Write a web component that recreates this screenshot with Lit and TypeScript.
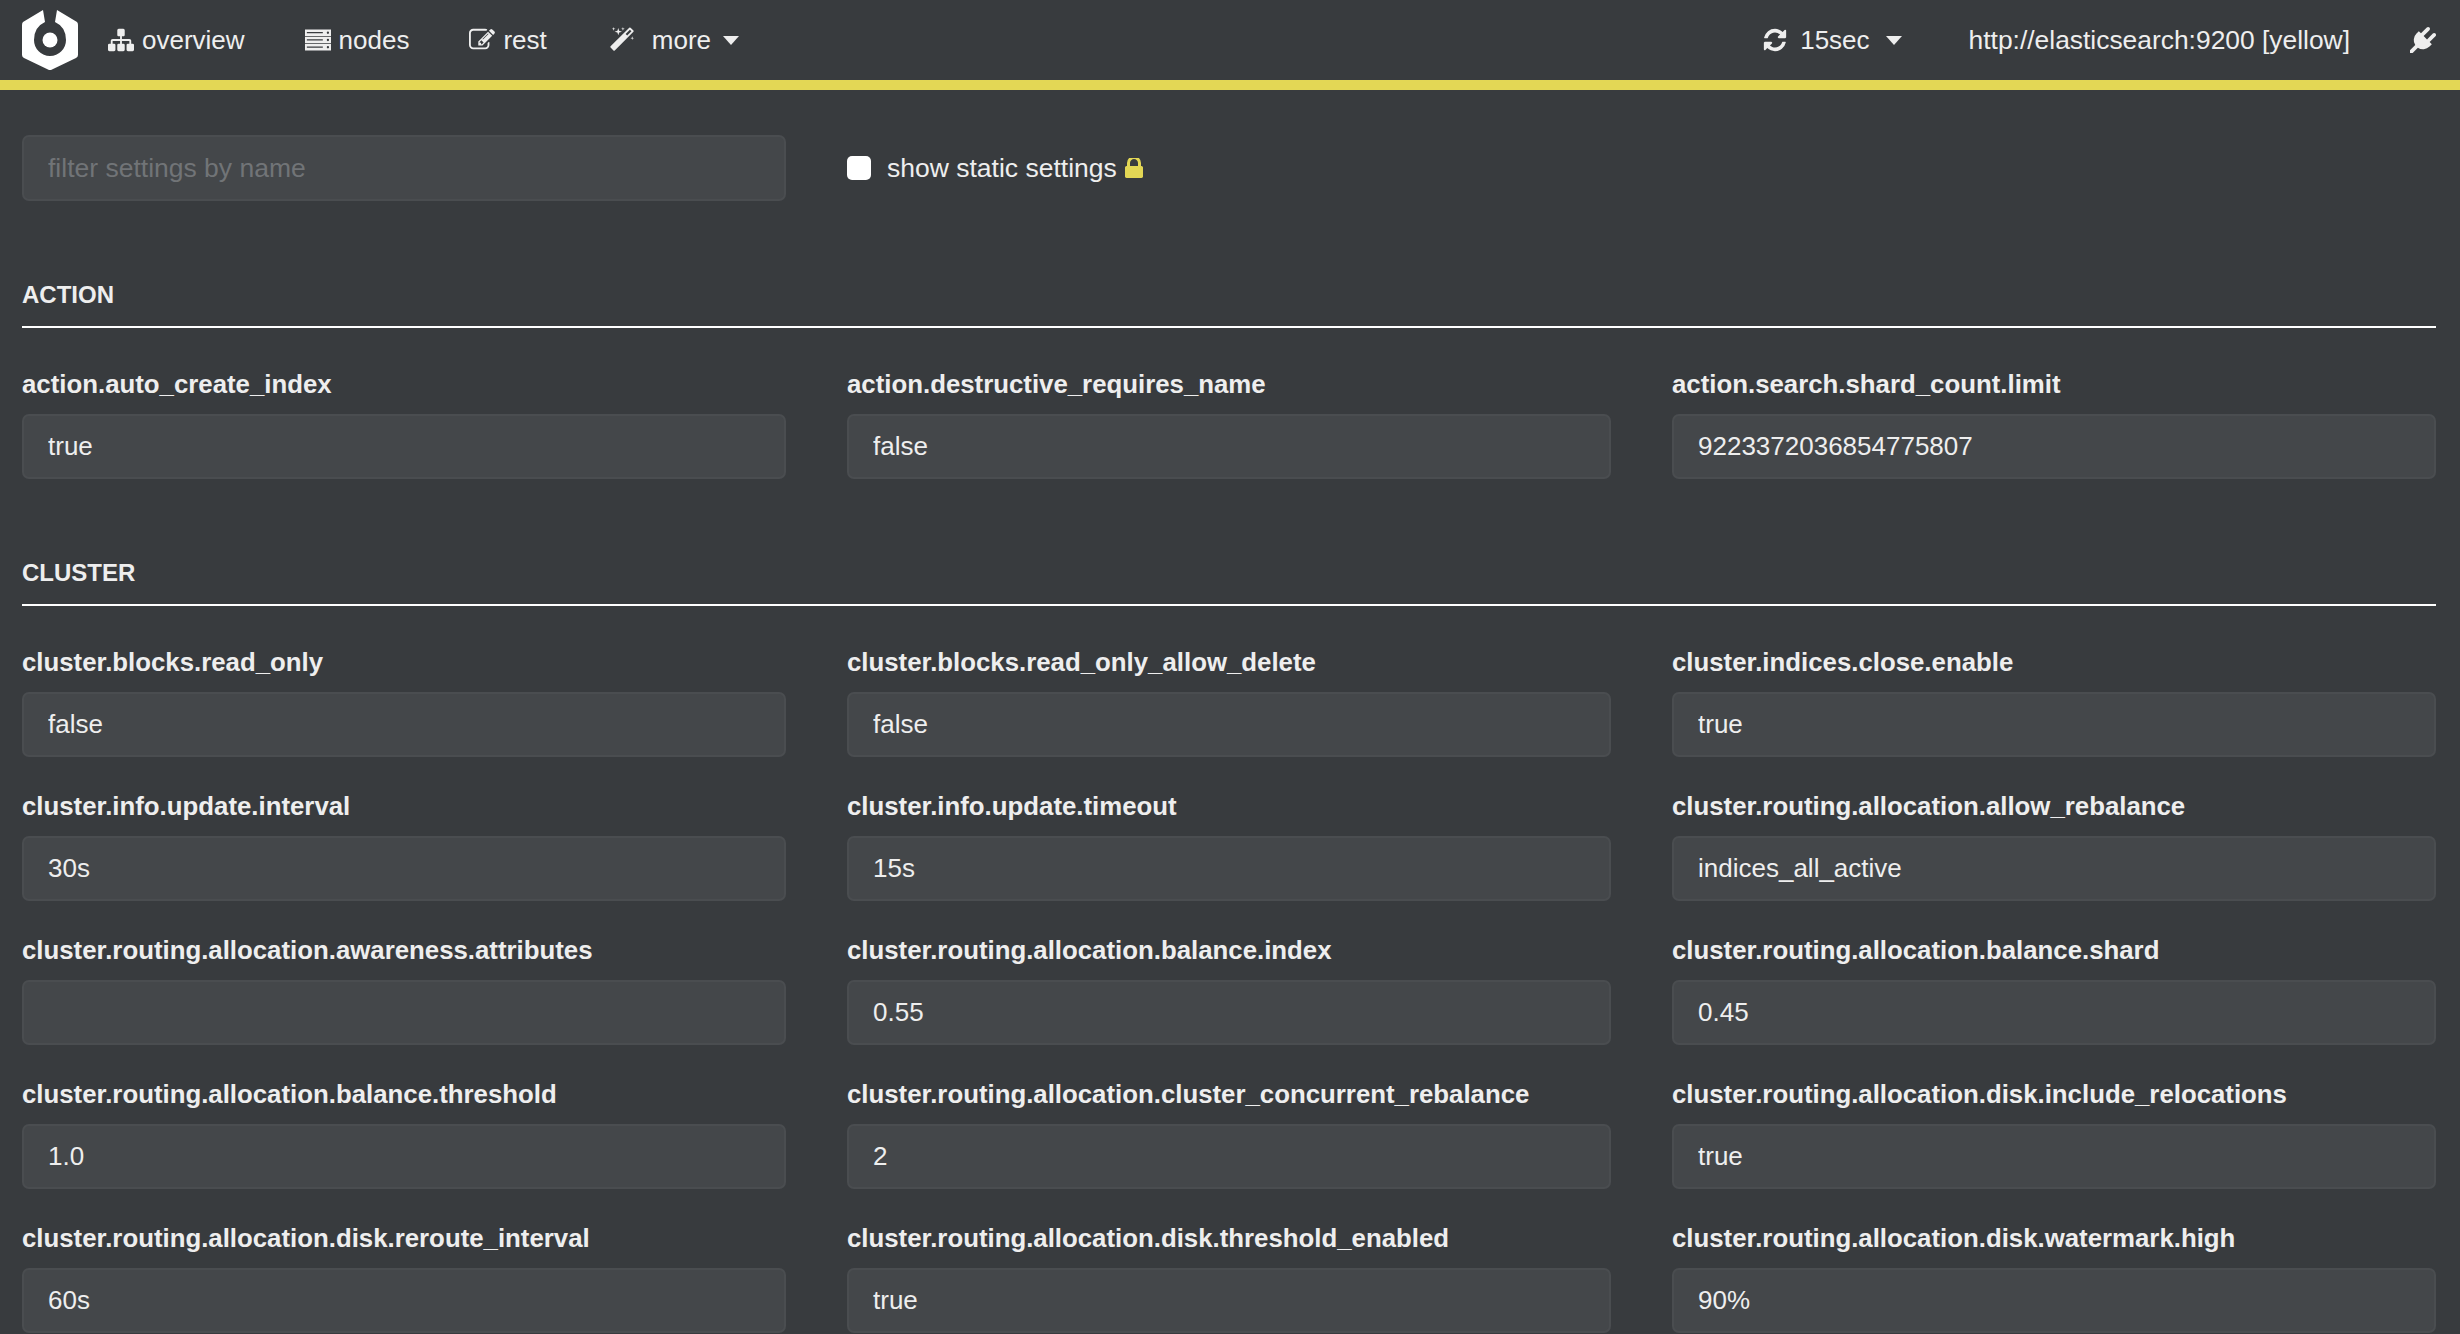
import { LitElement, css, html, svg } from "lit";
import { customElement } from "lit/decorators.js";

const sections = [
  {
    title: "ACTION",
    settings: [
      ["action.auto_create_index", "true"],
      ["action.destructive_requires_name", "false"],
      ["action.search.shard_count.limit", "9223372036854775807"],
    ],
  },
  {
    title: "CLUSTER",
    settings: [
      ["cluster.blocks.read_only", "false"],
      ["cluster.blocks.read_only_allow_delete", "false"],
      ["cluster.indices.close.enable", "true"],
      ["cluster.info.update.interval", "30s"],
      ["cluster.info.update.timeout", "15s"],
      ["cluster.routing.allocation.allow_rebalance", "indices_all_active"],
      ["cluster.routing.allocation.awareness.attributes", ""],
      ["cluster.routing.allocation.balance.index", "0.55"],
      ["cluster.routing.allocation.balance.shard", "0.45"],
      ["cluster.routing.allocation.balance.threshold", "1.0"],
      ["cluster.routing.allocation.cluster_concurrent_rebalance", "2"],
      ["cluster.routing.allocation.disk.include_relocations", "true"],
      ["cluster.routing.allocation.disk.reroute_interval", "60s"],
      ["cluster.routing.allocation.disk.threshold_enabled", "true"],
      ["cluster.routing.allocation.disk.watermark.high", "90%"],
    ],
  },
];

// font-awesome 4 glyphs, all on a 1792 box
const icons = {
  sitemap: "M1792 1248v320q0 40-28 68t-68 28h-320q-40 0-68-28t-28-68v-320q0-40 28-68t68-28h96v-192h-512v192h96q40 0 68 28t28 68v320q0 40-28 68t-68 28h-320q-40 0-68-28t-28-68v-320q0-40 28-68t68-28h96v-192h-512v192h96q40 0 68 28t28 68v320q0 40-28 68t-68 28h-320q-40 0-68-28t-28-68v-320q0-40 28-68t68-28h96v-192q0-52 38-90t90-38h512v-192h-96q-40 0-68-28t-28-68v-320q0-40 28-68t68-28h320q40 0 68 28t28 68v320q0 40-28 68t-68 28h-96v192h512q52 0 90 38t38 90v192h96q40 0 68 28t28 68z",
  server: "M0 172h1792v448h-1792zM128 340v96h1100v-96zM1500 396a80 80 0 1 0 160 0a80 80 0 1 0-160 0zM0 672h1792v448h-1792zM128 840v96h1100v-96zM1500 896a80 80 0 1 0 160 0a80 80 0 1 0-160 0zM0 1172h1792v448h-1792zM128 1340v96h1100v-96zM1500 1396a80 80 0 1 0 160 0a80 80 0 1 0-160 0z",
  edit: "M888 1184l116-116-152-152-116 116v56h96v96h56zm440-720q-16-16-33 1l-350 350q-17 17-1 33t33-1l350-350q17-17 1-33zm80 594v190q0 119-84.5 203.5t-203.5 84.5h-832q-119 0-203.5-84.5t-84.5-203.5v-832q0-119 84.5-203.5t203.5-84.5h832q63 0 117 25 15 7 18 23 3 17-9 29l-49 49q-14 14-32 8-23-6-45-6h-832q-66 0-113 47t-47 113v832q0 66 47 113t113 47h832q66 0 113-47t47-113v-126q0-13 9-22l64-64q15-15 35-7t20 29zm-96-738l288 288-672 672h-288v-288zm444 132l-92 92-288-288 92-92q28-28 68-28t68 28l152 152q28 28 28 68t-28 68z",
  magic: "M1254 581l293-293-107-107-293 293zm447-293q0 27-18 45l-1286 1286q-18 18-45 18t-45-18l-198-198q-18-18-18-45t18-45l1286-1286q18-18 45-18t45 18l198 198q18 18 18 45zm-1351-190l98 30-98 30-30 98-30-98-98-30 98-30 30-98zm350 162l196 60-196 60-60 196-60-196-196-60 196-60 60-196zm930 478l98 30-98 30-30 98-30-98-98-30 98-30 30-98zm-640-640l98 30-98 30-30 98-30-98-98-30 98-30 30-98z",
  refresh: "M1639 1056q0 5-1 7-64 268-268 434.5t-478 166.5q-146 0-282.5-55t-243.5-157l-129 129q-19 19-45 19t-45-19-19-45v-448q0-26 19-45t45-19h448q26 0 45 19t19 45-19 45l-137 137q71 66 161 102t187 36q134 0 250-65t186-179q11-17 53-117 8-23 30-23h192q13 0 22.5 9.5t9.5 22.5zm25-800v448q0 26-19 45t-45 19h-448q-26 0-45-19t-19-45 19-45l138-138q-148-137-349-137-134 0-250 65t-186 179q-11 17-53 117-8 23-30 23h-199q-13 0-22.5-9.5t-9.5-22.5v-7q65-268 270-434.5t480-166.5q146 0 284 55.5t245 156.5l130-129q19-19 45-19t45 19 19 45z",
  plug: "M1755 453q37 38 37 90.5t-37 90.5l-401 400 150 150-160 160q-163 163-389.5 186.5t-411.5-100.5l-362 362h-181v-181l362-362q-124-185-100.5-411.5t186.5-389.5l160-160 150 150 400-401q38-37 91-37t90 37 37 90.5-37 90.5l-400 401 234 234 401-400q38-37 91-37t90 37z",
  lock: "M640 768h512v-192q0-106-75-181t-181-75-181 75-75 181v192zm832 96v576q0 40-28 68t-68 28h-960q-40 0-68-28t-28-68v-576q0-40 28-68t68-28h32v-192q0-184 132-316t316-132 316 132 132 316v192h32q40 0 68 28t28 68z",
};

const icon = (name: keyof typeof icons) => html`<svg class="icon" viewBox="0 0 1792 1792" fill="currentColor" fill-rule="evenodd">${svg`<path d=${icons[name]}></path>`}</svg>`;

@customElement("app-root")
export class AppRoot extends LitElement {
  static styles = css`
    :host {
      display: block;
      height: 100vh;
      overflow: hidden;
      background: #383b3e;
      color: #eeeeee;
      font-family: "Liberation Sans", Arial, sans-serif;
      font-size: 26px;
    }
    .navbar {
      display: flex;
      align-items: center;
      height: 80px;
      padding: 0 24px 0 22px;
      border-bottom: 10px solid #e3d755;
    }
    .logo {
      width: 56px;
      height: 60px;
      margin-right: 30px;
      flex: none;
    }
    .nav-item {
      display: flex;
      align-items: center;
      gap: 8px;
      margin-right: 60px;
      color: #eeeeee;
    }
    .nav-item.rest {
      margin-right: 62px;
    }
    .nav-item.more {
      gap: 17px;
    }
    .nav-item.more .caret {
      margin-left: -5px;
    }
    .nav-item.refresh {
      gap: 12px;
      margin-right: 67px;
    }
    .nav-item.url {
      margin-right: 60px;
      font-size: 26.4px;
    }
    .nav-item.plug {
      margin-right: 0;
    }
    .icon {
      width: 26px;
      height: 26px;
      flex: none;
    }
    .caret {
      width: 0;
      height: 0;
      margin-left: 4px;
      border-left: 8px solid transparent;
      border-right: 8px solid transparent;
      border-top: 9px solid #eeeeee;
    }
    .spacer {
      flex: 1;
    }
    .filters {
      display: grid;
      grid-template-columns: repeat(3, 764px);
      column-gap: 61px;
      align-items: center;
      padding: 45px 22px 0;
    }
    .check {
      display: flex;
      align-items: center;
      gap: 16px;
      font-size: 26.5px;
    }
    .box {
      appearance: none;
      width: 24px;
      height: 24px;
      margin: 0;
      border-radius: 5px;
      background: #ffffff;
    }
    .lock {
      width: 18px;
      height: 20px;
      margin-left: -8px;
      color: #e3d755;
    }
    .field {
      box-sizing: border-box;
      width: 100%;
      height: 66px;
      padding: 0 24px;
      border: 2px solid #4a4d50;
      border-radius: 7px;
      background: #44474a;
      color: #eeeeee;
      font: inherit;
      outline: none;
    }
    .field::placeholder {
      color: #717477;
      opacity: 1;
      font-size: 26.5px;
    }
    .grid .field {
      height: 65px;
    }
    .section {
      padding: 0 24px 0 22px;
    }
    .section-title {
      margin: 0;
      padding: 76px 0 13px;
      border-bottom: 2px solid #ffffff;
      font-size: 24px;
      line-height: 36px;
      font-weight: 700;
    }
    .grid {
      display: grid;
      grid-template-columns: repeat(3, 764px);
      column-gap: 61px;
      row-gap: 31px;
      padding-top: 38px;
    }
    .setting-label {
      display: block;
      margin-bottom: 12px;
      font-size: 25.8px;
      line-height: 36px;
      font-weight: 700;
    }
  `;

  render() {
    return html`
      <nav class="navbar">
        <svg class="logo" viewBox="0 0 56 60">
          <path fill="#ffffff" d="M21 0 L1 12 Q0 13 0 15 V45 Q0 47 2 48 L27 60 Q28 60 29 60 L54 48 Q56 47 56 45 V15 Q56 13 55 12 L35 0 L33 12 Q44 17 44 30 A16 16 0 0 1 12 30 Q12 17 23 12 Z"></path>
          <circle cx="28" cy="30" r="7.5" fill="#ffffff"></circle>
        </svg>
        <div class="nav-item">${icon("sitemap")}overview</div>
        <div class="nav-item">${icon("server")}nodes</div>
        <div class="nav-item rest">${icon("edit")}rest</div>
        <div class="nav-item more">${icon("magic")}more<span class="caret"></span></div>
        <div class="spacer"></div>
        <div class="nav-item refresh">${icon("refresh")}15sec<span class="caret"></span></div>
        <div class="nav-item url">http://elasticsearch:9200 [yellow]</div>
        <div class="nav-item plug">${icon("plug")}</div>
      </nav>
      <div class="filters">
        <input class="field" placeholder="filter settings by name" />
        <label class="check">
          <input class="box" type="checkbox" />
          show static settings
          <svg class="icon lock" viewBox="320 256 1152 1280" fill="currentColor">${svg`<path d=${icons.lock}></path>`}</svg>
        </label>
      </div>
      ${sections.map(
        (section) => html`
          <section class="section">
            <h2 class="section-title">${section.title}</h2>
            <div class="grid">
              ${section.settings.map(
                ([name, value]) => html`
                  <div>
                    <span class="setting-label">${name}</span>
                    <input class="field" .value=${value} />
                  </div>
                `
              )}
            </div>
          </section>
        `
      )}
    `;
  }
}
